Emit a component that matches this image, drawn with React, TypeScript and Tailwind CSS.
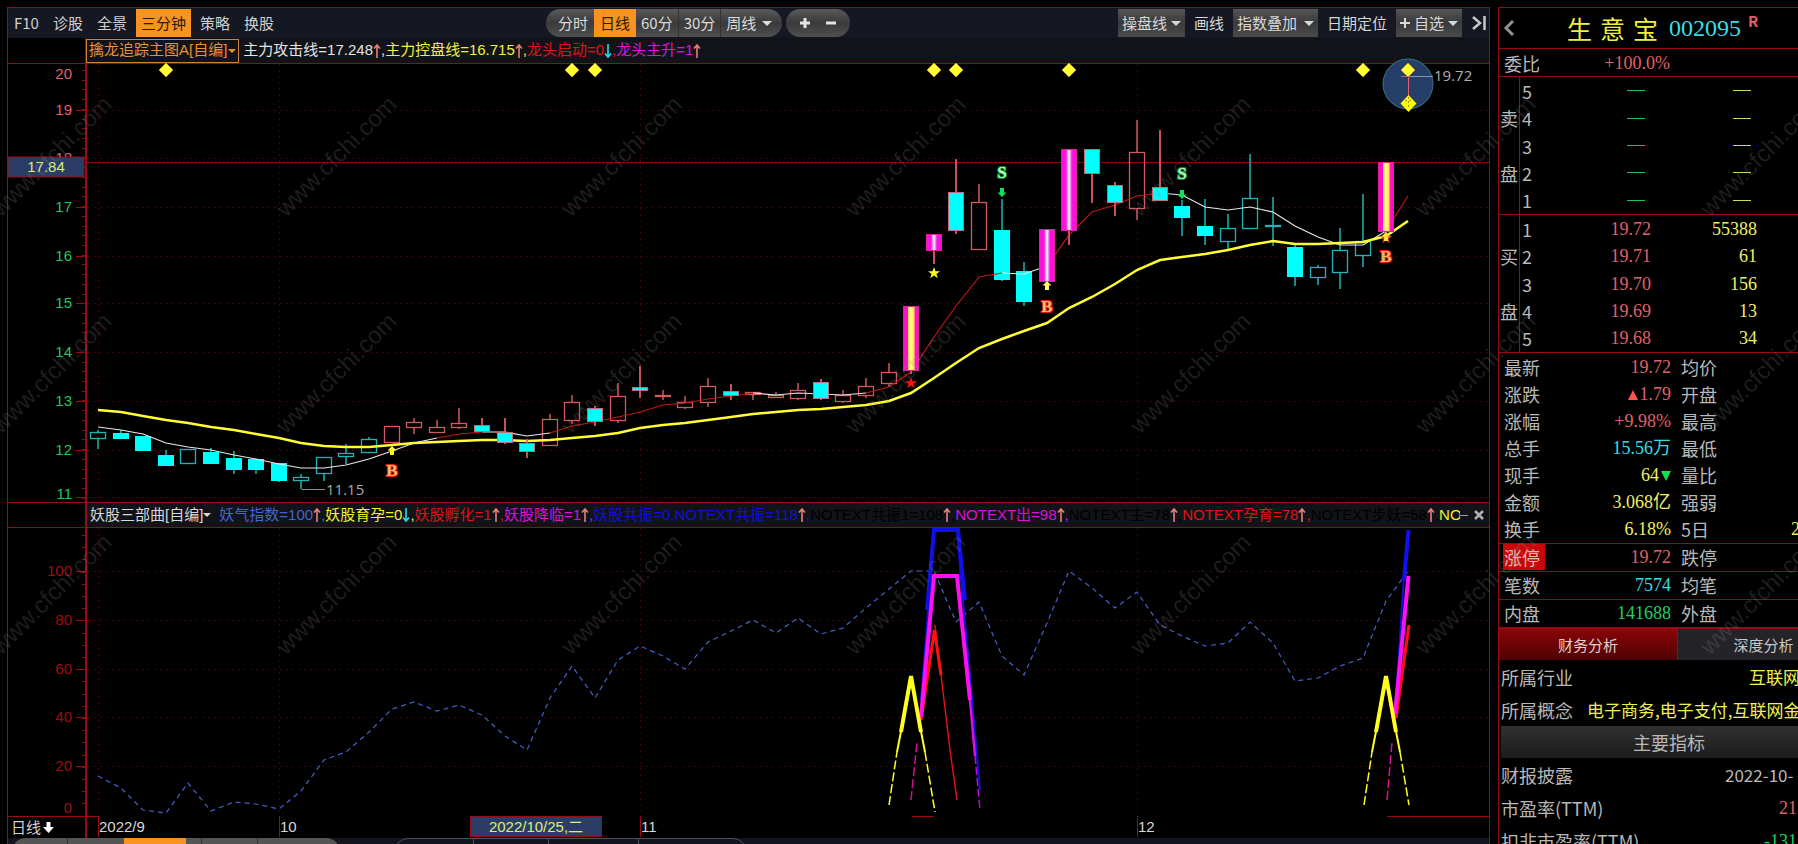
import type { ReactNode } from "react"
import clsx from "clsx"

// candle kinds: h = hollow, f = filled, m = limit-up with white core, y = limit-up with yellow core
type Kind = "h" | "f" | "m" | "y"
type Tone = "c" | "r" | "b"

const STEP = 22.59
const X0 = 98
const cx = (i: number) => Math.round(X0 + i * STEP)

// [kind, tone, body top, body bottom, wick top, wick bottom]
const candles: [Kind, Tone, number, number, number, number][] = [
  ["h", "c", 432, 438, 430, 449],
  ["f", "c", 433, 438, 430, 439],
  ["f", "c", 436, 450, 436, 450],
  ["f", "c", 455, 465, 450, 465],
  ["h", "c", 449, 463, 449, 463],
  ["f", "c", 452, 463, 448, 463],
  ["f", "c", 458, 469, 451, 474],
  ["f", "c", 459, 469, 459, 474],
  ["f", "c", 463, 480, 463, 482],
  ["h", "c", 477, 480, 474, 489],
  ["h", "c", 457, 473, 457, 481],
  ["h", "c", 453, 456, 444, 464],
  ["h", "c", 439, 452, 437, 452],
  ["h", "r", 426, 442, 426, 442],
  ["h", "r", 422, 427, 418, 434],
  ["h", "r", 427, 432, 420, 432],
  ["h", "r", 423, 427, 408, 429],
  ["f", "b", 425, 431, 418, 432],
  ["f", "b", 432, 442, 418, 444],
  ["f", "b", 443, 451, 439, 458],
  ["h", "r", 419, 445, 414, 446],
  ["h", "r", 402, 420, 395, 424],
  ["f", "b", 408, 421, 406, 426],
  ["h", "r", 396, 420, 383, 423],
  ["f", "b", 387, 390, 366, 398],
  ["h", "r", 395, 396, 390, 400],
  ["h", "r", 402, 407, 396, 409],
  ["h", "r", 386, 402, 378, 407],
  ["f", "b", 391, 395, 384, 400],
  ["h", "r", 392, 394, 392, 400],
  ["h", "r", 395, 397, 392, 397],
  ["h", "r", 390, 398, 383, 400],
  ["f", "b", 382, 398, 379, 400],
  ["h", "r", 395, 401, 390, 403],
  ["h", "r", 386, 395, 378, 398],
  ["h", "r", 372, 383, 363, 387],
  ["y", "r", 306, 370, 306, 374],
  ["m", "r", 234, 250, 234, 264],
  ["f", "b", 192, 230, 159, 234],
  ["h", "r", 202, 249, 184, 249],
  ["f", "c", 230, 279, 199, 281],
  ["f", "c", 271, 301, 262, 306],
  ["m", "r", 229, 281, 229, 281],
  ["m", "r", 149, 230, 149, 245],
  ["f", "b", 149, 173, 149, 203],
  ["f", "b", 185, 202, 182, 216],
  ["h", "r", 152, 208, 120, 220],
  ["f", "b", 187, 200, 130, 200],
  ["f", "c", 206, 217, 200, 236],
  ["f", "c", 226, 235, 199, 245],
  ["h", "c", 228, 241, 214, 251],
  ["h", "c", 198, 228, 154, 228],
  ["h", "c", 225, 226, 197, 246],
  ["f", "c", 247, 276, 244, 286],
  ["h", "c", 267, 277, 265, 285],
  ["h", "c", 250, 272, 228, 289],
  ["h", "c", 241, 255, 194, 267],
  ["y", "r", 162, 231, 162, 234],
]

const controlLine = [
  410, 412, 416, 420, 423, 427, 430, 434, 438, 443, 446, 447, 447, 445, 443, 442, 441, 440, 440, 441, 440, 438, 436,
  433, 428, 425, 423, 420, 417, 414, 412, 410, 409, 407, 405, 401, 393, 378, 363, 348, 339, 331, 323, 308, 297, 284,
  270, 260, 257, 254, 250, 245, 241, 244, 244, 243, 242, 236, 221,
]

const attackLine = [
  427, 430, 434, 443, 447, 450, 455, 459, 464, 468, 468, 465, 459, 451, 443, 438, 434, 432, 432, 436, 433, 426, 422,
  417, 412, 405, 403, 399, 396, 393, 395, 393, 394, 395, 393, 387, 372, 337, 306, 277, 273, 274, 266, 235, 212, 205,
  196, 193, 195, 207, 210, 207, 212, 226, 237, 245, 245, 231, 196,
]

const attackParts = [
  { from: 0, to: 15, color: "#e8e8e8" },
  { from: 15, to: 17, color: "#c01818" },
  { from: 17, to: 20, color: "#e8e8e8" },
  { from: 20, to: 29, color: "#c01818" },
  { from: 29, to: 34, color: "#e8e8e8" },
  { from: 34, to: 40, color: "#c01818" },
  { from: 40, to: 42, color: "#e8e8e8" },
  { from: 42, to: 47, color: "#c01818" },
  { from: 47, to: 57, color: "#e8e8e8" },
  { from: 57, to: 58, color: "#c01818" },
]

const indexLine = [
  776, 788, 810, 813, 783, 811, 802, 804, 809, 791, 760, 752, 732, 709, 702, 711, 705, 715, 736, 750, 698, 666, 698,
  660, 646, 656, 669, 642, 631, 620, 633, 618, 634, 628, 608, 589, 571, 571, 622, 602, 656, 675, 623, 571, 588, 608,
  592, 625, 636, 646, 643, 622, 643, 681, 678, 666, 658, 601, 571,
]

const diamonds = [3, 21, 22, 37, 38, 43, 56, 58]
const months = [0, 8, 24, 46]
const minorPrice = Array.from({ length: 45 }, (_, i) => Math.round(70 + i * 9.72))
const minorIndex = Array.from({ length: 24 }, (_, i) => Math.round(535 + i * 12.2))

const priceTicks = [
  { label: "20", y: 74, tick: 0, color: "#e0606b" },
  { label: "19", y: 110, tick: 110, color: "#e0606b" },
  { label: "18", y: 158, tick: 158, color: "#e0606b" },
  { label: "17", y: 207, tick: 207, color: "#22c55e" },
  { label: "16", y: 256, tick: 256, color: "#22c55e" },
  { label: "15", y: 303, tick: 303, color: "#22c55e" },
  { label: "14", y: 352, tick: 352, color: "#22c55e" },
  { label: "13", y: 401, tick: 401, color: "#22c55e" },
  { label: "12", y: 450, tick: 450, color: "#22c55e" },
  { label: "11", y: 494, tick: 497, color: "#22c55e" },
]

const indexTicks = [
  { label: "100", y: 571 },
  { label: "80", y: 620 },
  { label: "60", y: 669 },
  { label: "40", y: 717 },
  { label: "20", y: 766 },
]

const pts = (ys: number[], from = 0) => ys.map((y, i) => `${cx(i + from)},${y}`).join(" ")

function Candle({ i, c }: { i: number; c: (typeof candles)[number] }) {
  const [kind, tone, top, bottom, high, low] = c
  const x = cx(i)
  const stroke = tone === "c" ? "#1fb5b8" : "#d05a5e"
  const border = tone === "b" ? "#c07078" : kind === "f" ? "#00ffff" : stroke
  const fill = kind === "h" ? "none" : kind === "f" ? "#00ffff" : kind === "m" ? "url(#core-white)" : "url(#core-yellow)"
  return (
    <g>
      <path d={`M${x} ${high}V${top}M${x} ${bottom}V${low}`} stroke={stroke} strokeWidth="1.5" />
      <rect
        x={x - 7.5}
        y={top + 0.5}
        width="15"
        height={Math.max(bottom - top, 1)}
        fill={fill}
        stroke={kind === "m" || kind === "y" ? "#e0209a" : border}
        strokeWidth={kind === "h" ? 1.3 : 1}
      />
    </g>
  )
}

function Mark({ x, y, text }: { x: number; y: number; text: "B" | "S" }) {
  return (
    <text
      x={x}
      y={y + 6}
      textAnchor="middle"
      fontSize="17"
      fontWeight="700"
      paintOrder="stroke"
      strokeWidth="2"
      className={clsx(
        "font-['Liberation_Serif',serif]",
        text === "B" ? "fill-[#ffb36b] stroke-[#e0200a]" : "fill-[#b8ffb8] stroke-[#0c8a30]",
      )}
    >
      {text}
    </text>
  )
}

function Diamond({ x, y }: { x: number; y: number }) {
  return <path d={`M${x} ${y - 7}l7 7l-7 7l-7 -7z`} fill="#ffff33" stroke="#f0a020" strokeWidth="0.6" />
}

function Star({ x, y, color }: { x: number; y: number; color: string }) {
  return <path d={`M${x} ${y - 6}l1.5 4.2h4.5l-3.6 2.7l1.4 4.4l-3.8 -2.7l-3.8 2.7l1.4 -4.4l-3.6 -2.7h4.5z`} fill={color} />
}

function PriceChart() {
  return (
    <svg
      viewBox="8 64 1481 438"
      className="block h-auto w-full overflow-visible font-['Liberation_Sans',sans-serif] text-[15px]"
    >
      <defs>
        <linearGradient id="core-white">
          <stop offset="0.12" stopColor="#ff10e0" />
          <stop offset="0.3" stopColor="#ff10e0" />
          <stop offset="0.42" stopColor="#e8a8f0" />
          <stop offset="0.5" stopColor="#ffffff" />
          <stop offset="0.58" stopColor="#e8a8f0" />
          <stop offset="0.7" stopColor="#ff10e0" />
        </linearGradient>
        <linearGradient id="core-yellow">
          <stop offset="0.28" stopColor="#ff10c8" />
          <stop offset="0.3" stopColor="#ffd040" />
          <stop offset="0.5" stopColor="#ffffa0" />
          <stop offset="0.7" stopColor="#ffe040" />
          <stop offset="0.78" stopColor="#ff10c8" />
        </linearGradient>
      </defs>

      <g stroke="#3c0406" strokeWidth="1" strokeDasharray="2 4" shapeRendering="crispEdges">
        {priceTicks.map((t) => t.tick > 0 && <path key={t.label} d={`M88 ${t.tick + 0.5}H1489`} />)}
        {months.map((m) => (
          <path key={m} d={`M${cx(m) + 0.5} 64V502`} />
        ))}
      </g>

      <g stroke="#960c12" shapeRendering="crispEdges">
        <path d="M86 64V502" strokeWidth="2" />
        {minorPrice.map((y) => (
          <path key={y} d={`M82 ${y + 0.5}h4`} />
        ))}
        {priceTicks.map((t) => t.tick > 0 && <path key={t.label} d={`M76 ${t.tick + 0.5}h10`} />)}
      </g>
      {priceTicks.map((t) => (
        <text key={t.label} x="72" y={t.y + 5} textAnchor="end" fill={t.color}>
          {t.label}
        </text>
      ))}
      <path d="M86 162.5H1489" stroke="#9a1216" strokeDasharray="3 1" />
      <rect x="8" y="157" width="76" height="20" fill="#2b3d66" stroke="#960c12" />
      <text x="46" y="172" textAnchor="middle" fill="#d8f078">
        17.84
      </text>

      <circle cx="1408" cy="84" r="25" fill="#263f68" stroke="#3d7488" />

      {candles.map((c, i) => (
        <Candle key={i} i={i} c={c} />
      ))}

      {attackParts.map((p) => (
        <polyline
          key={p.from}
          points={pts(attackLine.slice(p.from, p.to + 1), p.from)}
          fill="none"
          stroke={p.color}
          strokeWidth="1.2"
        />
      ))}
      <polyline points={pts(controlLine)} fill="none" stroke="#ffff33" strokeWidth="2.5" />

      {/* limit-up bars stay above the averages */}
      {candles.map((c, i) => (c[0] === "m" || c[0] === "y" || c[1] === "b" ? <Candle key={i} i={i} c={c} /> : null))}

      {diamonds.map((i) => (
        <Diamond key={i} x={cx(i)} y={70} />
      ))}

      <path d="M1401 76.5h15" stroke="#d05a5e" />
      <path d="M1409 76.5h24" stroke="#8d93a8" />
      <path d="M1408.5 77v19" stroke="#e06070" />
      <path d="M1408.5 95l8 8.500l-8 8.500l-8 -8.500z" fill="#ffff00" />
      <path d="M1408.5 97v12M1405 100.500h7" stroke="#b09000" strokeDasharray="2 2" />
      <text x="1434" y="81" fill="#b0b0b0" className="font-['Open_Sans',sans-serif]">
        19.72
      </text>

      <path d="M301.500 489.500H325" stroke="#8a8a8a" />
      <text x="326" y="495" fill="#a8a8a8" className="font-['Open_Sans',sans-serif]">
        11.15
      </text>

      <Star x={911} y={383} color="#ff1010" />
      <Star x={934} y={273} color="#ffff20" />
      <Star x={1386} y={238} color="#ff4020" />

      {[
        { x: 392, y: 446, color: "#ffff20" },
        { x: 1047, y: 281, color: "#ffff60" },
        { x: 1386, y: 232, color: "#ffe030" },
      ].map((a) => (
        <path key={a.x} d={`M${a.x} ${a.y}l4.500 4.500h-2.500v4.500h-4v-4.500h-2.500z`} fill={a.color} />
      ))}
      {[
        { x: 1002, y: 197 },
        { x: 1182, y: 199 },
      ].map((a) => (
        <path key={a.x} d={`M${a.x} ${a.y}l4.500 -4.500h-2.500v-4.500h-4v4.500h-2.500z`} fill="#10e060" />
      ))}
      <Mark x={392} y={470} text="B" />
      <Mark x={1047} y={306} text="B" />
      <Mark x={1386} y={256} text="B" />
      <Mark x={1002} y={172} text="S" />
      <Mark x={1182} y={173} text="S" />
    </svg>
  )
}

function IndexChart() {
  return (
    <svg
      viewBox="8 528 1481 310"
      className="block h-auto w-full font-['Liberation_Sans','Noto_Sans_CJK_SC',sans-serif] text-[15px]"
    >
      <g stroke="#3c0406" strokeDasharray="2 4" shapeRendering="crispEdges">
        {indexTicks.map((t) => (
          <path key={t.label} d={`M88 ${t.y + 0.5}H1489`} />
        ))}
        {months.map((m) => (
          <path key={m} d={`M${cx(m) + 0.5} 528V816`} />
        ))}
      </g>
      <g stroke="#960c12" shapeRendering="crispEdges">
        <path d="M86 528V838" strokeWidth="2" />
        {minorIndex.map((y) => (
          <path key={y} d={`M82 ${y + 0.5}h4`} />
        ))}
        {indexTicks.map((t) => (
          <path key={t.label} d={`M76 ${t.y + 0.5}h10`} />
        ))}
        <path d="M8 816.500H98M912 816.500h22M1387 816.500h102" />
        {months.map((m) => (
          <path key={m} d={`M${cx(m) + 0.5} 816V837`} />
        ))}
      </g>
      {indexTicks.map((t) => (
        <text key={t.label} x="72" y={t.y + 5} textAnchor="end" fill="#a00a0e">
          {t.label}
        </text>
      ))}
      <text x="72" y="813" textAnchor="end" fill="#a00a0e">
        0
      </text>

      <polyline points={pts(indexLine)} fill="none" stroke="#4460c8" strokeWidth="1.2" strokeDasharray="5 4" />

      {/* signal spikes: thin dashed feet, heavy tops */}
      <g fill="none" strokeLinejoin="miter">
        <path d="M921 700L934 532M957 532L980 790" stroke="#1010d8" strokeWidth="2" />
        <path d="M927 610L934 530H958L965 600" stroke="#1010e8" strokeWidth="4" />
        <path d="M911 800L917 742" stroke="#d01090" strokeWidth="1.5" strokeDasharray="9 3" />
        <path d="M935 625L950 750L957 800" stroke="#e01010" strokeWidth="1.500" />
        <path d="M921 720L934.500 630L941 675" stroke="#ff1010" strokeWidth="3" />
        <path d="M921 717L934 576H957L970 700" stroke="#ff10f0" strokeWidth="4" />
        <path d="M970 700L975 756" stroke="#e010e0" strokeWidth="2.500" />
        <path d="M975 756L980 810" stroke="#b010d0" strokeWidth="1.500" strokeDasharray="8 3" />
        <path d="M889 805L897 752M925 752L935 812" stroke="#ffff20" strokeWidth="1.500" strokeDasharray="9 3" />
        <path d="M897 752L911 680L925 752" stroke="#ffff20" strokeWidth="2" />
        <path d="M901 732L911 676L921 732" stroke="#ffff20" strokeWidth="4" />

        <path d="M1387 800L1392 742" stroke="#d01090" strokeWidth="1.500" strokeDasharray="9 3" />
        <path d="M1395 714L1405 560" stroke="#1010d8" strokeWidth="2" />
        <path d="M1404 580L1408.500 530" stroke="#1010f0" strokeWidth="4" />
        <path d="M1396 718L1409 625" stroke="#ff1010" strokeWidth="3" />
        <path d="M1395 714L1408.500 576" stroke="#ff10f0" strokeWidth="4" />
        <path d="M1364 805L1372 752M1400 752L1409 805" stroke="#ffff20" strokeWidth="1.500" strokeDasharray="9 3" />
        <path d="M1372 752L1386 680L1400 752" stroke="#ffff20" strokeWidth="2" />
        <path d="M1376 732L1386 676L1396 732" stroke="#ffff20" strokeWidth="4" />
      </g>

      <text x="11" y="833" fill="#d0d0d0">
        日线
      </text>
      <path d="M46.500 822h4v5h3.500l-5.500 6l-5.500 -6h3.500z" fill="#fff" />
      <text x="99" y="832" fill="#d8d8d8">
        2022/9
      </text>
      <text x="280" y="832" fill="#d8d8d8">
        10
      </text>
      <text x="641" y="832" fill="#d8d8d8">
        11
      </text>
      <text x="1138" y="832" fill="#d8d8d8">
        12
      </text>
      <rect x="470.500" y="816.500" width="131" height="20" fill="#2b3d66" stroke="#960c12" />
      <text x="536" y="832" textAnchor="middle" fill="#d8f078">
        2022/10/25,二
      </text>
    </svg>
  )
}

function Arrow({ down = false }: { down?: boolean }) {
  return (
    <svg viewBox="0 0 8 16" className="h-4 w-2 shrink-0" fill="none" strokeWidth="1.6">
      {down ? (
        <path d="M4 1v13M1 10.500l3 3.500l3 -3.500" stroke="#20e0e8" />
      ) : (
        <path d="M4 15V2M1 5.500l3 -3.500l3 3.500" stroke="#e88078" />
      )}
    </svg>
  )
}

function Caret({ small = false }: { small?: boolean }) {
  return (
    <span
      className={clsx(
        "inline-block border-x-transparent border-t-current",
        small ? "border-x-[4px] border-t-[4px]" : "border-x-[5px] border-t-[5px]",
      )}
    />
  )
}

interface LegendItem {
  text: string
  color: string
  dir?: "up" | "down"
  last?: boolean
}

const mainLegend: LegendItem[] = [
  { text: "主力攻击线=17.248", color: "text-[#e4e4e4]", dir: "up" },
  { text: "主力控盘线=16.715", color: "text-[#f0f040]", dir: "up" },
  { text: "龙头启动=0", color: "text-[#e01414]", dir: "down" },
  { text: "龙头主升=1", color: "text-[#e010e0]", dir: "up", last: true },
]

const subLegend: LegendItem[] = [
  { text: "妖气指数=100", color: "text-[#4464d0]", dir: "up" },
  { text: "妖股育孕=0", color: "text-[#f0f030]", dir: "down" },
  { text: "妖股孵化=1", color: "text-[#d81414]", dir: "up" },
  { text: "妖股降临=1", color: "text-[#d810d8]", dir: "up" },
  { text: "妖股共振=0", color: "text-[#1010d8]" },
  { text: "NOTEXT共振=118", color: "text-[#1010d8]", dir: "up" },
  { text: "NOTEXT共振1=108", color: "text-black", dir: "up" },
  { text: "NOTEXT出=98", color: "text-[#d810d8]", dir: "up" },
  { text: "NOTEXT主=78", color: "text-black", dir: "up" },
  { text: "NOTEXT孕育=78", color: "text-[#e01414]", dir: "up" },
  { text: "NOTEXT步妖=58", color: "text-black", dir: "up" },
  { text: "NO", color: "text-[#f0f030]", last: true },
]

function Legend({ items }: { items: LegendItem[] }) {
  return (
    <div className="flex min-w-0 flex-1 items-center overflow-hidden whitespace-nowrap">
      {items.map((item) => (
        <span key={item.text} className={clsx("flex shrink-0 items-center", item.color)}>
          {item.text}
          {item.dir && <Arrow down={item.dir === "down"} />}
          {!item.last && ","}
        </span>
      ))}
    </div>
  )
}

function ToolButton({ children, active = false }: { children: ReactNode; active?: boolean }) {
  return (
    <button className={clsx("h-7 px-[5px]", active ? "bg-[#f7931e] text-[#2a1a08]" : "text-[#d0d0d0]")}>{children}</button>
  )
}

const grayButton =
  "flex h-7 items-center gap-1 bg-linear-to-b from-[#555] via-[#3a3a3c] to-[#4a4a4a] px-1 text-[#d8d8d8]"
const pill = "flex h-7 items-center rounded-full bg-linear-to-b from-[#5a5a5a] via-[#3a3a3a] to-[#505050] text-[#dcdcdc]"

function Toolbar() {
  return (
    <div className="flex h-[30px] items-center bg-[#151722]">
      <div className="flex gap-1 pl-px">
        {["F10", "诊股", "全景", "三分钟", "策略", "换股"].map((name) => (
          <ToolButton key={name} active={name === "三分钟"}>
            {name}
          </ToolButton>
        ))}
      </div>
      <div className={clsx(pill, "ml-[267px] overflow-hidden")}>
        <button className="h-7 pr-[6px] pl-3">分时</button>
        <button className="h-7 bg-[#f7931e] px-[6px] text-[#2a1a08]">日线</button>
        <button className="h-7 border-r border-[#333] px-[5px]">60分</button>
        <button className="h-7 border-r border-[#333] px-[5px]">30分</button>
        <button className="flex h-7 items-center gap-[6px] pr-[10px] pl-[5px]">
          周线
          <Caret />
        </button>
      </div>
      <div className={clsx(pill, "ml-1 gap-4 px-[14px]")}>
        <button aria-label="放大">
          <svg viewBox="0 0 10 10" className="size-[10px]" stroke="#e4e4e4" strokeWidth="3">
            <path d="M5 0v10M0 5h10" />
          </svg>
        </button>
        <button aria-label="缩小">
          <svg viewBox="0 0 10 10" className="size-[10px]" stroke="#e4e4e4" strokeWidth="3">
            <path d="M0 5h10" />
          </svg>
        </button>
      </div>
      <div className="ml-auto flex items-center gap-[9px] pr-[2px] text-[#d8d8d8]">
        <button className={grayButton}>
          操盘线
          <Caret />
        </button>
        <button>画线</button>
        <button className={grayButton}>
          <span className="mr-[3px]">指数叠加</span>
          <Caret />
        </button>
        <button>日期定位</button>
        <button className={grayButton}>
          <svg viewBox="0 0 10 10" className="size-[10px]" stroke="#d8d8d8" strokeWidth="2">
            <path d="M5 0v10M0 5h10" />
          </svg>
          自选
          <Caret />
        </button>
        <button aria-label="收起">
          <svg viewBox="0 0 16 16" className="size-4" fill="none" stroke="#c8c8c8" strokeWidth="2.5">
            <path d="M2 2l7 6l-7 6M13.500 1v14" />
          </svg>
        </button>
      </div>
    </div>
  )
}

function BottomStrip() {
  return (
    <div className="flex h-[6px] items-start overflow-hidden bg-[#14141f]">
      <div className="ml-1 flex h-7 w-[328px] shrink-0 overflow-hidden rounded-full bg-[#555]">
        <span className="w-14 border-r border-[#333]" />
        <span className="w-14" />
        <span className="w-[62px] bg-[#f7931e]" />
        <span className="w-4 border-r border-[#333]" />
        <span className="w-14 border-r border-[#333]" />
      </div>
      <div className="ml-[54px] flex h-7 w-[353px] shrink-0 rounded-full border border-[#50505a]">
        <span className="w-[79px] border-r border-[#50505a]" />
        <span className="w-[75px] border-r border-[#50505a]" />
        <span className="w-[90px] border-r border-[#50505a]" />
      </div>
    </div>
  )
}

const bids = [
  ["1", "19.72", "55388"],
  ["2", "19.71", "61"],
  ["3", "19.70", "156"],
  ["4", "19.69", "13"],
  ["5", "19.68", "34"],
]

const quotes = [
  { name: "最新", value: "19.72", color: "text-[#e0606b]", other: "均价" },
  { name: "涨跌", value: "▲1.79", color: "text-[#e0606b]", other: "开盘" },
  { name: "涨幅", value: "+9.98%", color: "text-[#e0606b]", other: "最高" },
  { name: "总手", value: "15.56万", color: "text-[#38dce8]", other: "最低" },
  { name: "现手", value: "64▼", color: "text-[#f0f060]", other: "量比" },
  { name: "金额", value: "3.068亿", color: "text-[#f0f060]", other: "强弱" },
  { name: "换手", value: "6.18%", color: "text-[#f0f060]", other: "5日", more: "2" },
  { name: "涨停", value: "19.72", color: "text-[#e0606b]", other: "跌停", hot: true },
  { name: "笔数", value: "7574", color: "text-[#38dce8]", other: "均笔", line: true },
  { name: "内盘", value: "141688", color: "text-[#22d060]", other: "外盘" },
]

const num = "font-['Liberation_Serif','Noto_Sans_CJK_SC',serif]"
const red = "border-[#960c12]"

function QuoteValue({ value }: { value: string }) {
  if (value.startsWith("▲")) {
    return (
      <>
        <span className="mr-[2px] inline-block border-x-[5px] border-b-[10px] border-x-transparent border-b-[#ff5050]" />
        {value.slice(1)}
      </>
    )
  }
  if (value.endsWith("▼")) {
    return (
      <>
        {value.slice(0, -1)}
        <span className="ml-[2px] inline-block border-x-[5px] border-t-[10px] border-x-transparent border-t-[#10e050]" />
      </>
    )
  }
  return <>{value}</>
}

function BookSide({ chars, children }: { chars: [string, string]; children: ReactNode }) {
  return (
    <div className={clsx("flex h-[138px] border-b", red)}>
      <div className={clsx("flex w-[21px] flex-col items-center justify-center gap-[29px] border-r leading-[26px]", red)}>
        <span>{chars[0]}</span>
        <span>{chars[1]}</span>
      </div>
      <div className="flex flex-1 flex-col">{children}</div>
    </div>
  )
}

function SidePanel() {
  return (
    <aside
      className={clsx(
        "w-[300px] shrink-0 overflow-hidden border-t border-l text-[18px] leading-[26px] whitespace-nowrap text-[#b8b8b8]",
        red,
      )}
    >
      <div className="w-[350px]">
        <div className={clsx("flex h-[41px] items-center border-b", red)}>
          <button aria-label="返回" className="ml-1">
            <svg viewBox="0 0 12 18" className="h-[18px] w-3" fill="none" stroke="#909090" strokeWidth="3">
              <path d="M10 2L3 9l7 7" />
            </svg>
          </button>
          <h1 className="ml-[52px] flex items-center gap-[11px]">
            <span className="flex gap-2 text-[25px] text-[#f0f040]">
              <span>生</span>
              <span>意</span>
              <span>宝</span>
            </span>
            <span className={clsx("text-[24px] text-[#38dce8]", num)}>002095</span>
            <sup className="-ml-1 text-[15px] font-bold text-[#e0606b]">R</sup>
          </h1>
        </div>
        <div className={clsx("flex h-7 items-center border-b pl-[5px]", red)}>
          <span>委比</span>
          <span className={clsx("w-[130px] text-right text-[#e0606b]", num)}>+100.0%</span>
        </div>
        <BookSide chars={["卖", "盘"]}>
          {["5", "4", "3", "2", "1"].map((n) => (
            <div key={n} className="flex flex-1 items-center pl-[2px]">
              <span className="w-[105px]">{n}</span>
              <span className="h-px w-[18px] bg-[#22c060]" />
              <span className="ml-[88px] h-px w-[18px] bg-[#d8d850]" />
            </div>
          ))}
        </BookSide>
        <BookSide chars={["买", "盘"]}>
          {bids.map(([n, price, vol]) => (
            <div key={n} className="flex flex-1 items-center pl-[2px]">
              <span className="w-6">{n}</span>
              <span className={clsx("w-[105px] text-right text-[#e0606b]", num)}>{price}</span>
              <span className={clsx("w-[106px] text-right text-[#f0f060]", num)}>{vol}</span>
            </div>
          ))}
        </BookSide>
        <div className={clsx("flex h-[276px] flex-col border-b-2", red)}>
          {quotes.map((q) => (
            <div
              key={q.name}
              className={clsx("flex flex-1 items-center pl-1", q.hot && "border-y", q.line && "border-b", red)}
            >
              <span className={clsx("w-[42px] pl-px", q.hot && "bg-[#c80808] text-[#e0b8b0]")}>{q.name}</span>
              <span className={clsx("w-[126px] text-right", num, q.color)}>
                <QuoteValue value={q.value} />
              </span>
              <span className="ml-[10px] w-[110px]">{q.other}</span>
              {q.more && <span className={clsx("text-[#f0f060]", num)}>{q.more}</span>}
            </div>
          ))}
        </div>
        <div className="flex h-[31px] text-[15px]">
          <button className="w-[178px] bg-linear-to-b from-[#8a0508] to-[#500204] text-[#e0d0d0]">财务分析</button>
          <button className="flex-1 border-l border-[#960c12] bg-[#242428] text-[#c8c8c8]">深度分析</button>
        </div>
        <div className="flex h-[33px] items-center pl-[2px]">
          <span className="w-[248px]">所属行业</span>
          <span className="text-[17px] text-[#f0f050]">互联网</span>
        </div>
        <div className="flex h-[33px] items-center pl-[2px]">
          <span className="w-[86px]">所属概念</span>
          <span className="text-[17px] text-[#f0f050]">电子商务,电子支付,互联网金</span>
        </div>
        <h2 className="ml-[2px] flex h-8 w-[336px] items-center justify-center bg-linear-to-b from-[#303030] to-[#1c1c1c]">
          主要指标
        </h2>
        <div className="flex h-[33px] items-center pl-[2px]">
          <span className="w-[224px]">财报披露</span>
          <span className="text-[17px]">2022-10-</span>
        </div>
        <div className="flex h-[33px] items-center pl-[2px]">
          <span className="w-[278px]">市盈率(TTM)</span>
          <span className={clsx("text-[#e0606b]", num)}>21</span>
        </div>
        <div className="flex h-[33px] items-center pl-[2px]">
          <span className="w-[263px]">扣非市盈率(TTM)</span>
          <span className={clsx("text-[#22d060]", num)}>-131</span>
        </div>
      </div>
    </aside>
  )
}

const markX = [-4, 281, 566, 850, 1135, 1420, 1705]
const markY = [213, 430, 651]

function Watermark() {
  return (
    <svg className="pointer-events-none absolute inset-0 size-full font-['Liberation_Sans',sans-serif] text-[24px]">
      {markY.map((y) =>
        markX.map((x) => (
          <text key={`${x}-${y}`} x={x + 5} y={y + 5} transform={`rotate(-45 ${x + 5} ${y + 5})`} fill="#8a8a8a" fillOpacity="0.22">
            www.cfchi.com
          </text>
        )),
      )}
    </svg>
  )
}

export default function App() {
  return (
    <div className="relative flex h-screen gap-2 overflow-hidden bg-black pt-[7px] pl-[7px] font-['Noto_Sans_CJK_SC',sans-serif] text-[15px]">
      <main className={clsx("min-w-0 flex-1 border border-b-0", red)}>
        <Toolbar />
        <div
          className={clsx(
            "flex h-[26px] items-center border-b bg-[#121318] font-['Liberation_Sans','Noto_Sans_CJK_SC',sans-serif]",
            red,
          )}
        >
          <div className={clsx("h-full w-[78px] border-r bg-black", red)} />
          <button className="mr-1 flex h-6 items-center gap-px border border-[#d08030] px-[2px] text-[#e8903a]">
            擒龙追踪主图A[自编]
            <Caret small />
          </button>
          <Legend items={mainLegend} />
        </div>
        <PriceChart />
        <div
          className={clsx(
            "flex h-[26px] items-center border-y bg-[#121318] font-['Liberation_Sans','Noto_Sans_CJK_SC',sans-serif]",
            red,
          )}
        >
          <div className={clsx("h-full w-[79px] border-r-2 bg-black", red)} />
          <button className="mr-2 ml-[3px] flex items-center text-[#d8d8d8]">
            妖股三部曲[自编]
            <Caret small />
          </button>
          <Legend items={subLegend} />
          <button aria-label="最小化" className="h-px w-2 bg-[#a0a0a0]" />
          <button aria-label="关闭" className="mr-1 ml-[5px]">
            <svg viewBox="0 0 12 12" className="size-3" stroke="#b0b0b0" strokeWidth="2.5">
              <path d="M2 2l8 8M10 2l-8 8" />
            </svg>
          </button>
        </div>
        <IndexChart />
        <BottomStrip />
      </main>
      <SidePanel />
      <Watermark />
    </div>
  )
}
